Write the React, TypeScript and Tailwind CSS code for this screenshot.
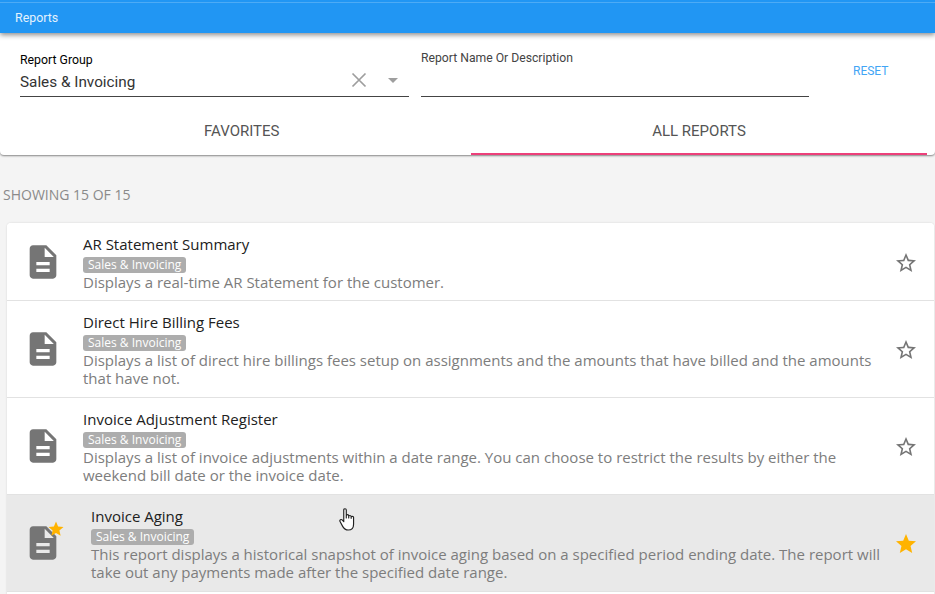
const DOC = "M14 2H6c-1.1 0-1.99.9-1.99 2L4 20c0 1.1.89 2 1.99 2H18c1.1 0 2-.9 2-2V8l-6-6zm2 16H8v-2h8v2zm0-4H8v-2h8v2zm-3-5V3.5L18.5 9H13z";
const STAR = "M12 17.27L18.18 21l-1.64-7.03L22 9.24l-7.19-.61L12 2 9.19 8.63 2 9.24l5.46 4.73L5.82 21z";
const STAR_O = "M22 9.24l-7.19-.62L12 2 9.19 8.63 2 9.24l5.46 4.73L5.82 21 12 17.27 18.18 21l-1.63-7.03L22 9.24zM12 15.4l-3.76 2.27 1-4.28-3.32-2.88 4.38-.38L12 6.1l1.71 4.04 4.38.38-3.32 2.88 1 4.28L12 15.4z";

const rows = [
  { title: "AR Statement Summary", desc: "Displays a real-time AR Statement for the customer.", h: "h-[78px] pt-[1px]", fav: false },
  { title: "Direct Hire Billing Fees", desc: "Displays a list of direct hire billings fees setup on assignments and the amounts that have billed and the amounts that have not.", h: "h-[97px]", fav: false },
  { title: "Invoice Adjustment Register", desc: "Displays a list of invoice adjustments within a date range. You can choose to restrict the results by either the weekend bill date or the invoice date.", h: "h-[97px]", fav: false },
  { title: "Invoice Aging", desc: "This report displays a historical snapshot of invoice aging based on a specified period ending date. The report will take out any payments made after the specified date range.", h: "h-[97px]", fav: true },
];

function Row({ r }: { r: (typeof rows)[number] }) {
  return (
    <div className={`flex items-center border-b border-[#e2e2e2] ${r.h} ${r.fav ? "bg-[#e9e9e9]" : "bg-white"} pl-[16px] pr-[16px]`}>
      <div className={`relative w-[40px] h-[40px] shrink-0 ${r.fav ? "mr-[28px]" : "mr-[20px]"}`}>
        <svg viewBox="0 0 24 24" className="w-[40px] h-[40px]" fill="#757575"><path d={DOC} /></svg>
        {r.fav && (
          <svg viewBox="0 0 24 24" className="absolute -top-[3px] left-[24px] w-[18px] h-[18px]" fill="#ffb300"><path d={STAR} /></svg>
        )}
      </div>
      <div className="flex-1 min-w-0 pt-[2px]">
        <div className="text-[15px] leading-[18px] text-[#212121]">{r.title}</div>
        <div className="flex mt-[4px]">
          <span className="h-[16px] px-[5px] rounded-[3px] bg-[#adadad] text-white text-[12px] leading-[16px]">Sales &amp; Invoicing</span>
        </div>
        <div className="text-[15px] leading-[18.5px] text-[#7d7d7d]">{r.desc}</div>
      </div>
      <svg viewBox="0 0 24 24" className="w-[24px] h-[24px] ml-[12px] mt-[2px] shrink-0" fill={r.fav ? "#ffb300" : "#757575"}>
        <path d={r.fav ? STAR : STAR_O} />
      </svg>
    </div>
  );
}

export default function App() {
  return (
    <div className="relative h-[594px] w-[935px] overflow-hidden bg-[#f4f4f4] font-['Open_Sans',sans-serif]">
      <header className="relative z-10 h-[33px] bg-[#2196f3] border-t-[2px] border-[#2196f3] shadow-[0_2px_5px_rgba(0,0,0,0.45)]">
        <div className="h-px bg-[#4dabf5]" />
        <div className="pl-[15px] text-[12.4px] leading-[30px] text-[#e3f2fd] font-['Roboto',sans-serif]">Reports</div>
      </header>

      <section className="h-[122px] bg-white rounded-b-[4px] shadow-[0_1px_2px_rgba(0,0,0,0.45)] font-['Roboto',sans-serif]">
        <div className="flex h-[77px] pl-[20px]">
          <div className="w-[389px] h-[64px] border-b border-[#444] pt-[20px]">
            <div className="text-[12.3px] leading-[14px] text-black">Report Group</div>
            <div className="flex items-center h-[22px] mt-[4px]">
              <span className="flex-1 text-[15.3px] leading-[22px] text-[#333]">Sales &amp; Invoicing</span>
              <svg viewBox="0 0 16 16" className="w-[16px] h-[16px] mr-[21px] -mt-[4px]" stroke="#9e9e9e" strokeWidth="1.7" fill="none"><path d="M1.5 1.5l13 13M14.5 1.5l-13 13" /></svg>
              <svg viewBox="0 0 10 5" className="w-[10px] h-[5px] mr-[11px] -mt-[4px]" fill="#9e9e9e"><path d="M0 0h10L5 5z" /></svg>
            </div>
          </div>
          <div className="w-[388px] h-[64px] ml-[12px] border-b border-[#444] pt-[18px] text-[12.2px] leading-[14px] text-[#444]">Report Name Or Description</div>
          <div className="flex-1 pl-[44px] pt-[31px] text-[12px] leading-[15px] text-[#42a5f5]">RESET</div>
        </div>
        <div className="flex h-[45px] text-[#555] pr-[8px]">
          <div className="w-[471px] pl-[204px] pt-[13px] leading-[16px] text-[15px]">FAVORITES</div>
          <div className="flex-1 flex justify-center pt-[13px] border-b-[2px] border-[#ec407a] leading-[16px] text-[15px]">ALL REPORTS</div>
        </div>
      </section>

      <div className="pl-[3px] pt-[31px] h-[68px] text-[14px] leading-[18px] text-[#8a8a8a]">SHOWING 15 OF 15</div>

      <div className="ml-[7px] mr-px h-[400px] bg-white rounded-t-[4px] overflow-hidden shadow-[0_0_2px_rgba(0,0,0,0.15)]">
        {rows.map((r) => <Row key={r.title} r={r} />)}
      </div>

      <svg viewBox="0 0 18 24" className="absolute left-[339px] top-[507px] w-[19px] h-[26px]" fill="#fff" stroke="#222" strokeWidth="1.1" strokeLinejoin="round">
        <path d="M4.5 2.5c0-1.6 2.4-1.6 2.4 0v7.5-2c0-1.4 2.3-1.4 2.3 0v2-1.2c0-1.4 2.3-1.4 2.3 0v1.6-.9c0-1.3 2.3-1.3 2.3 0v6.5c0 3-1.7 5.5-5 5.5-2.8 0-4-1-5.2-3.2L1 13.500c-.8-1.500 1-2.700 2.200-1.400l1.300 1.500z" />
      </svg>
    </div>
  );
}
